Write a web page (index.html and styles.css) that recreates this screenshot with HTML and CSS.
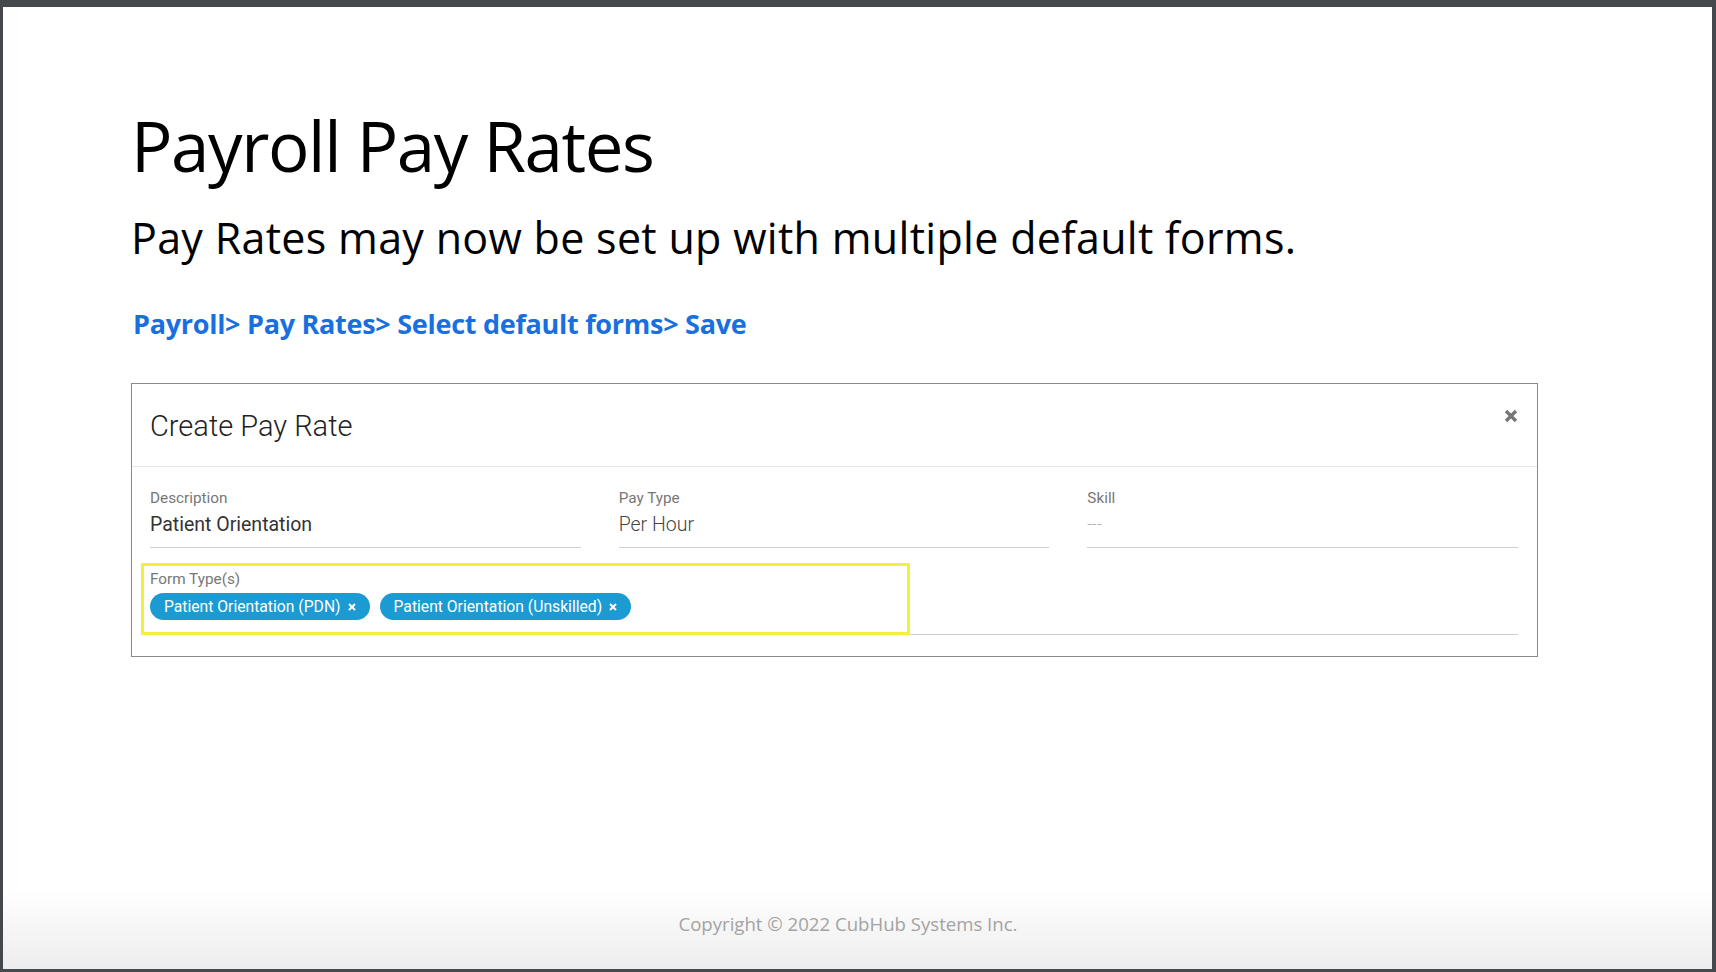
FILE: index.html
```html
<!DOCTYPE html>
<html lang="en">
<head>
<meta charset="utf-8">
<title>Payroll Pay Rates</title>
<link rel="stylesheet" href="styles.css">
</head>
<body>
<div class="slide">
  <div class="content">
    <h1 class="title">Payroll Pay Rates</h1>
    <p class="subtitle">Pay Rates may now be set up with multiple default forms.</p>
    <p class="crumbs">Payroll&gt; Pay Rates&gt; Select default forms&gt; Save</p>

    <div class="modal">
      <div class="modal-header">
        <span class="modal-title">Create Pay Rate</span>
        <svg class="close" width="14" height="14" viewBox="0 0 14 14" aria-label="Close">
          <path d="M2 2 L12 12 M12 2 L2 12" stroke="#777" stroke-width="3.4" stroke-linecap="butt"/>
        </svg>
      </div>
      <div class="modal-body">
        <div class="row">
          <div class="field">
            <div class="label">Description</div>
            <div class="value strong">Patient Orientation</div>
          </div>
          <div class="field">
            <div class="label">Pay Type</div>
            <div class="value">Per Hour</div>
          </div>
          <div class="field">
            <div class="label">Skill</div>
            <div class="value empty">---</div>
          </div>
        </div>
        <div class="field wide">
          <div class="highlight"></div>
          <div class="label">Form Type(s)</div>
          <div class="chips">
            <span class="chip">Patient Orientation (PDN) <svg class="chip-x" width="8" height="8" viewBox="0 0 8 8"><path d="M1 1 L7 7 M7 1 L1 7" stroke="#fff" stroke-width="2"/></svg></span>
            <span class="chip">Patient Orientation (Unskilled) <svg class="chip-x" width="8" height="8" viewBox="0 0 8 8"><path d="M1 1 L7 7 M7 1 L1 7" stroke="#fff" stroke-width="2"/></svg></span>
          </div>
        </div>
      </div>
    </div>
  </div>
  <footer class="footer">Copyright © 2022 CubHub Systems Inc.</footer>
</div>
</body>
</html>
```

FILE: styles.css
```css
html, body {
  margin: 0;
  padding: 0;
}
body {
  background: #45494d;
  height: 972px;
  overflow: hidden;
}
.slide {
  margin: 7px 4px 0 3px;
  height: 962px;
  background: linear-gradient(to bottom, #ffffff 0, #ffffff calc(100% - 80px), #ededed 100%);
  display: flex;
  flex-direction: column;
}
.content {
  padding: 98px 0 0 128px;
}
.title {
  margin: 0;
  font-family: "Open Sans", sans-serif;
  font-weight: 400;
  font-size: 69px;
  line-height: 80px;
  color: #000;
  letter-spacing: -1.4px;
}
.subtitle {
  margin: 28px 0 0 0;
  font-family: "Open Sans", sans-serif;
  font-size: 43px;
  line-height: 50px;
  color: #000;
  letter-spacing: 0.3px;
}
.crumbs {
  margin: 45px 0 0 2px;
  font-family: "Open Sans", sans-serif;
  font-weight: 700;
  font-size: 27px;
  line-height: 32px;
  color: #1a6fdf;
  letter-spacing: -0.28px;
}
.modal {
  margin-top: 43px;
  width: 1405px;
  border: 1px solid #8a8a8a;
  background: #fff;
  font-family: Roboto, sans-serif;
}
.modal-header {
  height: 83px;
  border-bottom: 1px solid #e6e6e8;
  display: flex;
  align-items: center;
  justify-content: space-between;
  padding: 0 19px 0 18px;
  box-sizing: border-box;
}
.modal-title {
  font-weight: 300;
  font-size: 29px;
  color: #222;
  margin-top: 2px;
}
.close {
  display: block;
  margin-top: -18px;
  margin-right: 0;
}
.modal-body {
  padding: 22px 19px 21px 18px;
}
.row {
  display: grid;
  grid-template-columns: 1fr 1fr 1fr;
  column-gap: 38px;
}
.field {
  border-bottom: 1px solid #cfcfcf;
  padding-bottom: 10px;
}
.label {
  font-size: 15.3px;
  line-height: 18px;
  color: #777;
  font-weight: 400;
}
.value {
  margin-top: 6px;
  font-size: 19.5px;
  line-height: 24px;
  color: #444;
  font-weight: 300;
}
.value.strong {
  font-weight: 400;
  color: #333;
}
.value.empty {
  color: #aaa;
  font-size: 16px;
  letter-spacing: 0.2px;
}
.field.wide {
  position: relative;
  margin-top: 22px;
  padding-bottom: 14px;
}
.highlight {
  position: absolute;
  left: -9px;
  top: -7px;
  width: 763px;
  height: 66px;
  border: 3px solid #f3f03a;
  pointer-events: none;
}
.chips {
  margin-top: 5px;
  display: flex;
  gap: 10px;
}
.chip {
  display: inline-flex;
  align-items: center;
  height: 27px;
  padding: 0 14px 0 14px;
  border-radius: 14px;
  background: #1b9bd1;
  color: #fff;
  font-size: 15.7px;
  font-weight: 400;
  gap: 7px;
}
.chip-x {
  display: block;
}
.footer {
  margin-top: auto;
  padding: 0 19px 33px 0;
  text-align: center;
  font-family: "Open Sans", sans-serif;
  font-size: 18.6px;
  line-height: 24px;
  color: #a3a3a3;
}
```
